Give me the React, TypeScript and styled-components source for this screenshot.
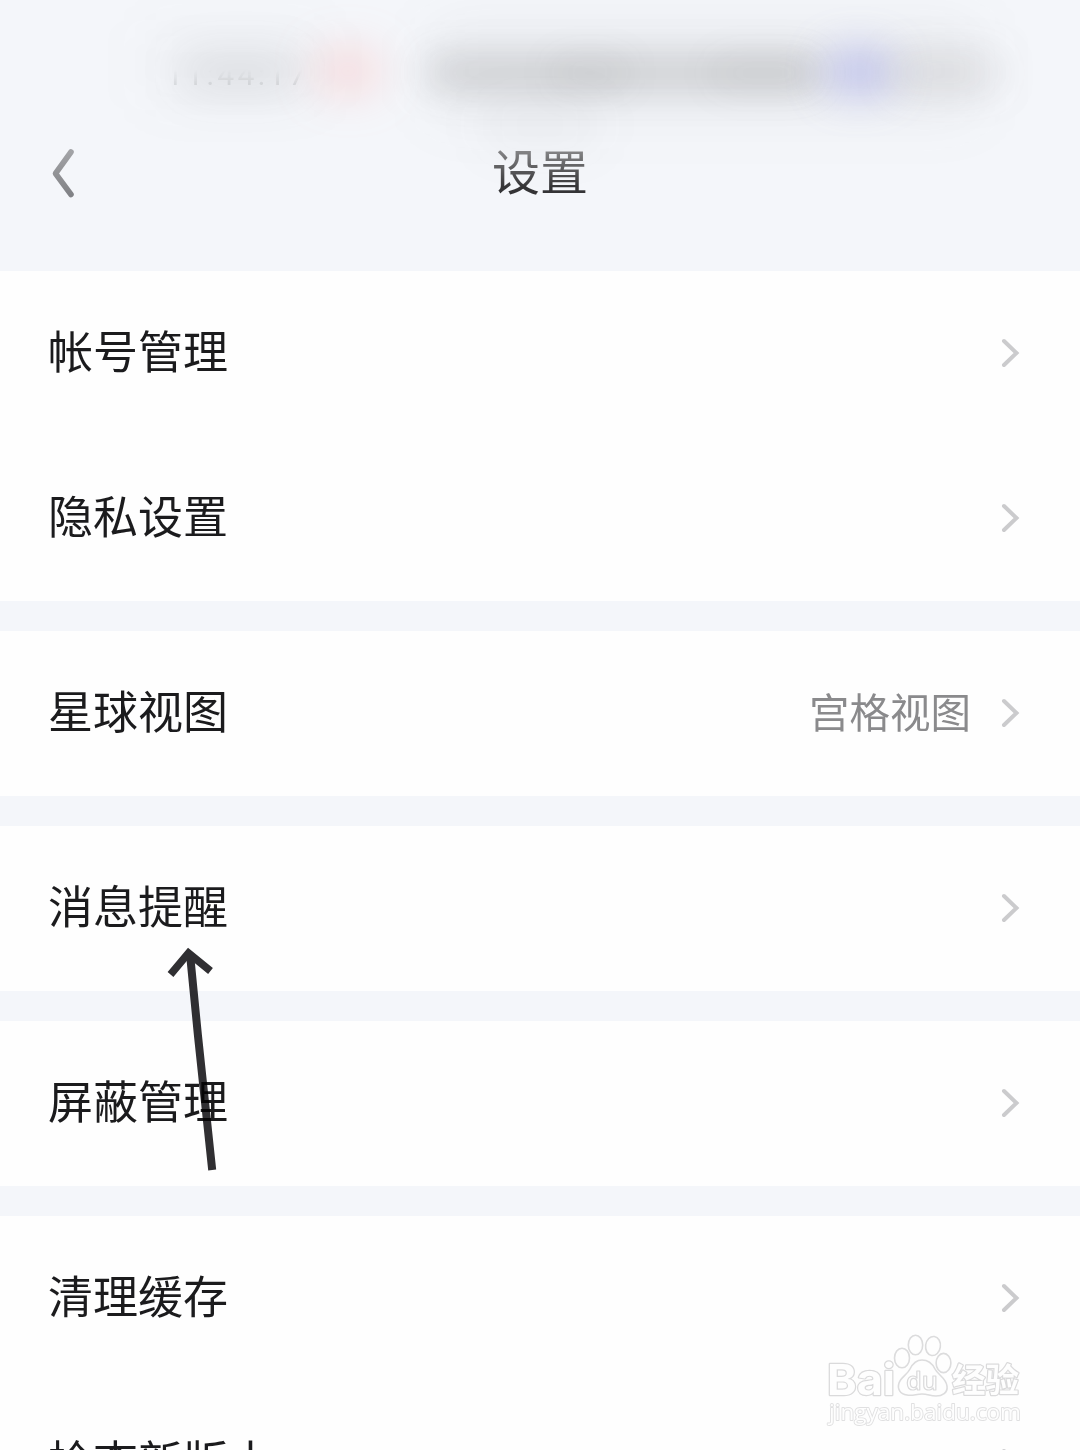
import React from "react";
import styled, { createGlobalStyle } from "styled-components";

const GlobalStyle = createGlobalStyle`
  * { box-sizing: border-box; }
  body { margin: 0; background: #f4f6fa; }
`;

const Screen = styled.main`
  position: relative;
  width: 1080px;
  height: 1450px;
  overflow: hidden;
  background: #f4f6fa;
  font-family: "Noto Sans CJK SC", sans-serif;
  color: #1b1b1d;
`;

const Header = styled.header`
  position: relative;
  height: 271px;
  padding-top: 76px;
  background: #f4f6fa;
`;

const StatusHaze = styled.div`
  position: absolute;
  inset: 0;
  overflow: hidden;
`;

const Smudge = styled.span<{ $x: number; $y: number; $w: number; $h: number; $color: string; $blur: number }>`
  position: absolute;
  left: ${(p) => p.$x}px;
  top: ${(p) => p.$y}px;
  width: ${(p) => p.$w}px;
  height: ${(p) => p.$h}px;
  border-radius: 20px;
  background: ${(p) => p.$color};
  filter: blur(${(p) => p.$blur}px);
`;

const Clock = styled.span`
  position: absolute;
  left: 166px;
  top: 58px;
  font: 30px/34px Roboto, sans-serif;
  letter-spacing: 3.4px;
  color: rgba(90, 92, 96, 0.16);
  filter: blur(0.5px);
  mask-image: linear-gradient(transparent 36%, #000 85%);
`;

const TitleBar = styled.div`
  position: relative;
  display: grid;
  grid-template-columns: 100px 1fr 100px;
  align-items: center;
  height: 194px;
`;

const BackButton = styled.button`
  display: flex;
  width: 100px;
  height: 100px;
  padding: 0 0 0 46px;
  align-items: center;
  border: 0;
  background: none;
`;

const Title = styled.h1`
  margin: 0 0 8px;
  text-align: center;
  font-size: 48px;
  line-height: 60px;
  font-weight: 400;
  color: transparent;
  background: linear-gradient(#8f8f91 12%, #343436 80%);
  background-clip: text;
`;

const Groups = styled.div`
  display: flex;
  flex-direction: column;
  gap: 30px;
`;

const Group = styled.section`
  background: #fefefe;
`;

const Row = styled.div`
  display: flex;
  align-items: center;
  height: 165px;
  padding: 0 60px 2px 48px;
`;

const Label = styled.span`
  flex: 1;
  padding-bottom: 5px;
  font-size: 45px;
  line-height: 60px;
`;

const Value = styled.span`
  margin-right: 29px;
  padding-bottom: 4px;
  font-size: 40.5px;
  line-height: 56px;
  color: #8a8a8c;
`;

const ArrowOverlay = styled.svg`
  position: absolute;
  left: 160px;
  top: 940px;
  mix-blend-mode: multiply;
`;

const Watermark = styled.svg`
  position: absolute;
  left: 820px;
  top: 1326px;
`;

const smudges = [
  { x: 180, y: 54, w: 120, h: 36, color: "rgba(70,70,75,.12)", blur: 22 },
  { x: 140, y: 20, w: 190, h: 90, color: "rgba(80,80,85,.025)", blur: 24 },
  { x: 316, y: 50, w: 64, h: 42, color: "rgba(255,150,145,.3)", blur: 22 },
  { x: 430, y: 24, w: 550, h: 92, color: "rgba(80,80,80,.06)", blur: 28 },
  { x: 425, y: 57, w: 395, h: 32, color: "rgba(70,70,70,.19)", blur: 18 },
  { x: 550, y: 58, w: 80, h: 30, color: "rgba(70,70,70,.07)", blur: 18 },
  { x: 710, y: 56, w: 110, h: 34, color: "rgba(70,70,70,.06)", blur: 18 },
  { x: 826, y: 50, w: 66, h: 44, color: "rgba(115,120,225,.36)", blur: 20 },
  { x: 890, y: 56, w: 110, h: 34, color: "rgba(80,70,72,.13)", blur: 20 },
  { x: 480, y: 100, w: 120, h: 50, color: "rgba(80,80,80,.04)", blur: 24 },
];

const groups: { label: string; value?: string }[][] = [
  [{ label: "帐号管理" }, { label: "隐私设置" }],
  [{ label: "星球视图", value: "宫格视图" }],
  [{ label: "消息提醒" }],
  [{ label: "屏蔽管理" }],
  [{ label: "清理缓存" }, { label: "检查新版本" }],
];

const Chevron = () => (
  <svg width="20" height="32" viewBox="0 0 20 32" fill="none">
    <path d="M4 4 L16.5 16 L4 28" stroke="#cbcbcd" strokeWidth="4" strokeLinecap="round" />
  </svg>
);

const BaiduMark = () => (
  <Watermark width="220" height="110" viewBox="0 0 220 110">
    <g fill="#fefefe" stroke="#dcdcdd" strokeWidth="1.6">
      <ellipse cx="82" cy="32" rx="7.5" ry="9.8" />
      <ellipse cx="95.5" cy="19" rx="7.2" ry="9.8" />
      <ellipse cx="113" cy="20" rx="7.4" ry="9.6" transform="rotate(8 113 20)" />
      <ellipse cx="123.5" cy="37" rx="7.4" ry="9.6" />
      <path d="M102 34 C108 34 112 37 115 43 C118 49 126 52 127 60 C128 67 122 70 116 70 C110 70 108 68 102 68 C96 68 93 70 87 69 C80 68 77 63 79 57 C81 51 87 49 90 43 C93 37 96 34 102 34 Z" />
    </g>
    <g fill="#fefefe" stroke="#dadadb" strokeWidth="1.4" strokeLinejoin="round">
      <text x="7" y="68.5" fontFamily="Inter, sans-serif" fontWeight="700" fontSize="43" strokeWidth="2.4" textLength="68" lengthAdjust="spacingAndGlyphs" style={{ paintOrder: "stroke" }}>Bai</text>
      <text x="86" y="64" fontFamily="Open Sans, sans-serif" fontWeight="600" fontSize="26" strokeWidth="1.2" textLength="32" lengthAdjust="spacingAndGlyphs">du</text>
      <text x="132" y="66" fontFamily="Noto Sans CJK SC, sans-serif" fontWeight="700" fontSize="33.5" strokeWidth="2.4" style={{ paintOrder: "stroke" }}>经验</text>
      <text x="9" y="94" fontFamily="Open Sans, sans-serif" fontWeight="400" fontSize="22" stroke="#e0e0e1" strokeWidth="1.8" textLength="192" lengthAdjust="spacingAndGlyphs" style={{ paintOrder: "stroke" }}>jingyan.baidu.com</text>
    </g>
  </Watermark>
);

export default function App() {
  return (
    <>
      <GlobalStyle />
      <Screen>
        <Header>
          <StatusHaze>
            {smudges.map((s, i) => (
              <Smudge key={i} $x={s.x} $y={s.y} $w={s.w} $h={s.h} $color={s.color} $blur={s.blur} />
            ))}
            <Clock>11:44:17</Clock>
          </StatusHaze>
          <TitleBar>
            <BackButton aria-label="返回">
              <svg width="34" height="56" viewBox="0 0 34 56" fill="none">
                <defs>
                  <linearGradient id="backTone" x1="0" y1="0" x2="0" y2="1">
                    <stop offset="0" stopColor="#a2a3a6" />
                    <stop offset="1" stopColor="#818286" />
                  </linearGradient>
                </defs>
                <path d="M25 7 L9.5 28.5 L25 49.5" stroke="url(#backTone)" strokeWidth="5.6" strokeLinecap="round" strokeLinejoin="round" />
              </svg>
            </BackButton>
            <Title>设置</Title>
          </TitleBar>
        </Header>
        <Groups>
          {groups.map((rows, i) => (
            <Group key={i}>
              {rows.map((row) => (
                <Row key={row.label}>
                  <Label>{row.label}</Label>
                  {row.value && <Value>{row.value}</Value>}
                  <Chevron />
                </Row>
              ))}
            </Group>
          ))}
        </Groups>
        <ArrowOverlay width="64" height="240" viewBox="0 0 64 240" fill="none" stroke="#302f32">
          <path d="M30 14 L38 96 L52.2 230" strokeWidth="8" />
          <path d="M10.5 34.5 L28.5 13 L50.5 31" strokeWidth="7.5" />
        </ArrowOverlay>
        <BaiduMark />
      </Screen>
    </>
  );
}
